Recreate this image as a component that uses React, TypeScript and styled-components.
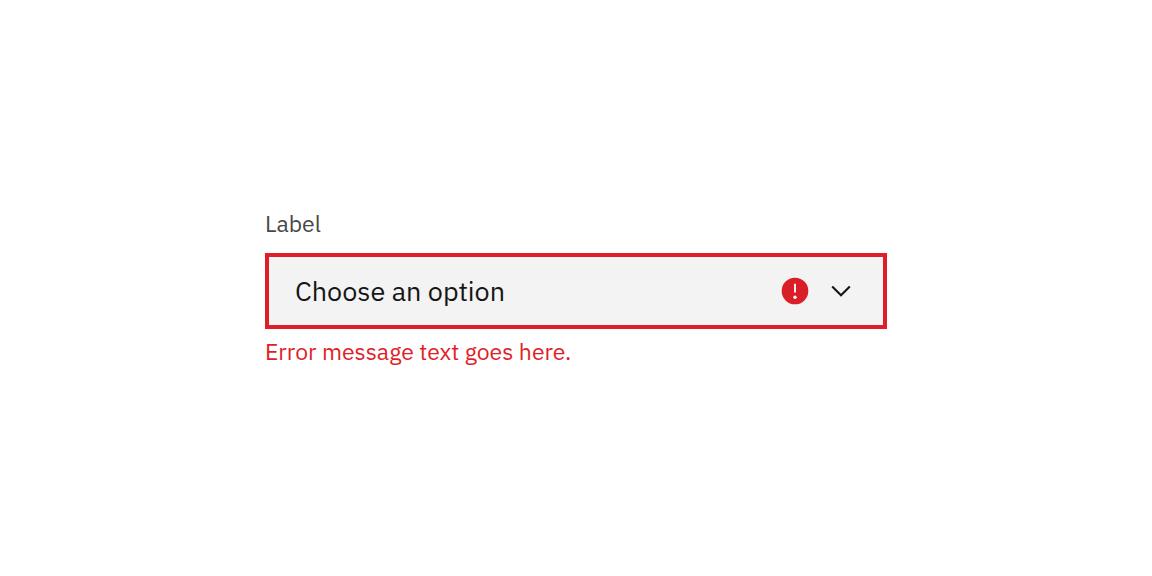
import React from "react";
import styled, { createGlobalStyle } from "styled-components";

const GlobalStyle = createGlobalStyle`
  *, *::before, *::after { box-sizing: border-box; }
  body {
    margin: 0;
    background: #ffffff;
    font-family: "IBM Plex Sans", "Open Sans", "Liberation Sans", sans-serif;
  }
`;

const Page = styled.main`
  display: flex;
  align-items: center;
  justify-content: center;
  min-height: 100vh;
`;

const Field = styled.div`
  display: flex;
  flex-direction: column;
  width: 54%;
`;

const Label = styled.label`
  align-self: flex-start;
  margin-bottom: 15px;
  color: #484848;
  font-size: 23px;
  line-height: 30px;
`;

const SelectWrapper = styled.div`
  display: grid;
  align-items: center;
`;

const Select = styled.select`
  grid-area: 1 / 1;
  appearance: none;
  width: 100%;
  height: 76px;
  margin: 0;
  padding: 0 112px 2px 26px;
  border: 4px solid #e01e29;
  border-radius: 0;
  outline: none;
  background: #f3f3f3;
  color: #161616;
  font-family: inherit;
  font-size: 27px;
`;

const Icons = styled.div`
  grid-area: 1 / 1;
  justify-self: end;
  display: flex;
  align-items: center;
  gap: 16px;
  margin-right: 31px;
  pointer-events: none;

  svg { display: block; }
`;

const ErrorMessage = styled.p`
  margin: 7px 0 2px;
  color: #e01e29;
  font-size: 23px;
  line-height: 30px;
`;

const WarningIcon = () => (
  <svg width="30" height="30" viewBox="0 0 16 16" aria-hidden="true">
    <circle cx="8" cy="8" r="7.1" fill="#da1e28" />
    <path d="M7.5 4.1h1v4.7h-1z" fill="#fff" />
    <circle cx="8" cy="11.3" r="0.9" fill="#fff" />
  </svg>
);

const ChevronIcon = () => (
  <svg width="30" height="30" viewBox="0 0 16 16" aria-hidden="true">
    <path d="M8 11.1 2.9 6l.8-.8L8 9.5l4.3-4.3.8.8z" fill="#161616" />
  </svg>
);

export default function App() {
  return (
    <Page>
      <GlobalStyle />
      <Field>
        <Label htmlFor="option">Label</Label>
        <SelectWrapper>
          <Select id="option" defaultValue="" aria-invalid="true" aria-describedby="option-error">
            <option value="">Choose an option</option>
          </Select>
          <Icons>
            <WarningIcon />
            <ChevronIcon />
          </Icons>
        </SelectWrapper>
        <ErrorMessage id="option-error">Error message text goes here.</ErrorMessage>
      </Field>
    </Page>
  );
}
